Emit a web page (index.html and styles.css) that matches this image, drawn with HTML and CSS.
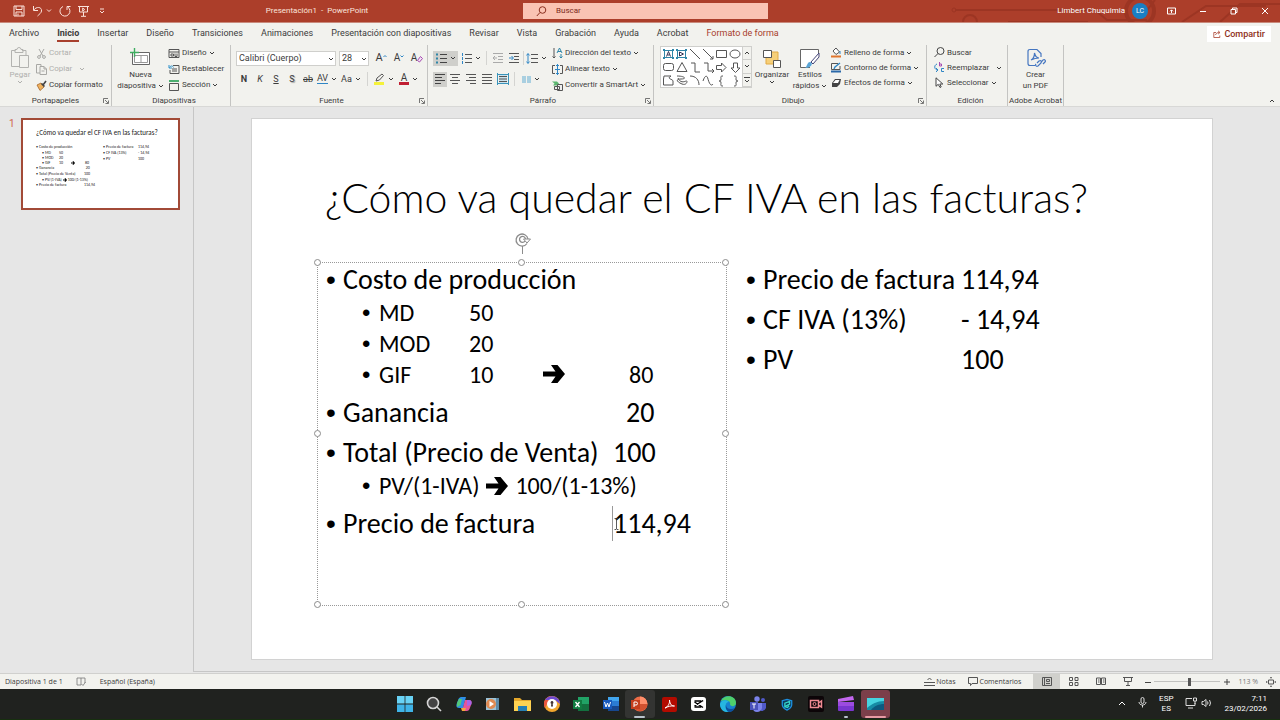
FILE: index.html
```html
<!DOCTYPE html>
<html lang="es">
<head>
<meta charset="utf-8">
<meta name="viewport" content="width=device-width, initial-scale=1">
<title>Presentación1 - PowerPoint</title>
<link rel="stylesheet" href="styles.css">
</head>
<body>
<svg class="defs" aria-hidden="true">
  <symbol id="chev" viewBox="0 0 6 4"><path d="M1 1l2 2 2-2" fill="none" stroke="currentColor"/></symbol>
  <symbol id="launch" viewBox="0 0 6 6"><path d="M.5 5V.5H5M2 2l3 3M5.500 2.500v3h-3" fill="none" stroke="#555" stroke-width=".8"/></symbol>
  <symbol id="arrow" viewBox="0 0 22 18"><path d="M0 6.500h12.500L8 0h6.500L22 9l-7.500 9H8l4.500-6.500H0z" fill="#000"/></symbol>
</svg>

<header class="titlebar">
  <svg class="circuit" viewBox="0 0 330 22" fill="none" stroke="#93301f" aria-hidden="true">
    <path d="M5 10h140l12 10h40M58 22h80M270 22l20-18h40M205 0l-14 18" stroke-width="2"/>
    <circle cx="4" cy="10" r="2"/><circle cx="20" cy="22" r="7" stroke-width="2"/><circle cx="190" cy="11" r="14" stroke-width="4"/><path d="M232 22l24-16h60" stroke-width="2"/>
  </svg>
  <div class="qat">
    <button aria-label="Guardar"><svg width="12" height="12" viewBox="0 0 12 12" fill="none" stroke="#fbe3dc"><path d="M1 1h10v10H1zM3 1v3.500h6V1M3 11V7h6v4M5 8.500v2"/></svg></button>
    <button aria-label="Deshacer"><svg width="20" height="12" viewBox="0 0 20 12" fill="none" stroke="#fbe3dc"><path d="M1.500 1v4.500H6M1.800 5C4 1.500 10 1.500 9.500 6 9.300 8 7.500 9 5.500 11"/><path d="M15 4.500l2 2 2-2"/></svg></button>
    <button aria-label="Rehacer"><svg width="12" height="12" viewBox="0 0 12 12" fill="none" stroke="#fbe3dc"><path d="M4 1.500a5 5 0 1 0 4.500.3M8 5V1.500h3.500"/></svg></button>
    <button aria-label="Presentación desde el principio"><svg width="11" height="12" viewBox="0 0 11 12" fill="none" stroke="#fbe3dc"><path d="M0 1.500h11M1.500 1.500v5.500h8V1.500M5.500 7v4M3 11.300h5M4.700 3v3l2-1.500z"/></svg></button>
    <button class="more" aria-label="Personalizar barra"><svg width="6" height="6" viewBox="0 0 6 6" fill="none" stroke="#fbe3dc"><path d="M1 1h4M1 3l2 2 2-2"/></svg></button>
  </div>
  <h1 class="doc">Presentación1&nbsp; -&nbsp; PowerPoint</h1>
  <label class="search">
    <svg width="11" height="11" viewBox="0 0 11 11" fill="none" stroke="#8a2f1f"><circle cx="6.500" cy="4" r="3.300"/><path d="M4 6.500L.8 10"/></svg>
    <input type="text" placeholder="Buscar" aria-label="Buscar">
  </label>
  <div class="account">
    <span>Limbert Chuquimia</span><span class="avatar">LC</span>
    <button aria-label="Opciones de cinta"><svg width="9" height="8" viewBox="0 0 9 8" fill="none" stroke="#fff"><path d="M.5 1h8v6h-8zM4.500 6V3M3 4.300l1.500-1.500L6 4.300"/></svg></button>
    <button aria-label="Minimizar"><svg width="8" height="8" viewBox="0 0 8 8" stroke="#fff"><path d="M1 4.500h6"/></svg></button>
    <button aria-label="Restaurar"><svg width="8" height="8" viewBox="0 0 8 8" fill="none" stroke="#fff"><path d="M1 2.500h4.500V7H1zM2.500 2.500V1H7v4.500H5.500"/></svg></button>
    <button aria-label="Cerrar"><svg width="8" height="8" viewBox="0 0 8 8" stroke="#fff"><path d="M1 1l6 6M7 1L1 7"/></svg></button>
  </div>
</header>

<nav class="tabs">
  <button>Archivo</button><button class="on">Inicio</button><button>Insertar</button><button>Diseño</button><button>Transiciones</button><button>Animaciones</button><button>Presentación con diapositivas</button><button>Revisar</button><button>Vista</button><button>Grabación</button><button>Ayuda</button><button>Acrobat</button><button class="ctx">Formato de forma</button>
  <button class="share"><svg width="8" height="8" viewBox="0 0 8 8" fill="none" stroke="#a8402d" stroke-width=".8"><path d="M3 2.500H.8v5h6V5.500M2.500 5C3 3 4.500 2.500 6.500 2.500M5 .8l2 1.700-2 1.700"/></svg>Compartir</button>
</nav>

<section class="ribbon" aria-label="Cinta de opciones">
  <div class="group g-clip">
    <div class="tools">
      <button class="big off"><svg width="20" height="22" viewBox="0 0 20 22" fill="none" stroke="#b3b3b0"><path d="M9 19.500H1.500v-16h4M12 3.500h4V8M5 5.500v-3h2a2 2 0 0 1 4 0h2v3zM9.500 8.500h9v12h-9z"/></svg><span>Pegar</span><svg class="c"><use href="#chev"/></svg></button>
      <div class="stack">
        <button class="off"><svg width="11" height="11" viewBox="0 0 11 11" fill="none" stroke="#a8a8a5"><path d="M3 1l4 7M8 1L4 8"/><circle cx="3" cy="9" r="1.400"/><circle cx="8" cy="9" r="1.400"/></svg>Cortar</button>
        <button class="off"><svg width="11" height="11" viewBox="0 0 11 11" fill="none" stroke="#a8a8a5"><path d="M4 9H.5V.5H5V2M4 2.500h4l2.500 2.500v5.500H4zM8 2.500V5h2.500M5.500 7h3"/></svg>Copiar <svg class="c gap"><use href="#chev"/></svg></button>
        <button><svg width="11" height="11" viewBox="0 0 11 11"><path d="M1 5l4-2 3 4-4 3.500z" fill="#f0b35e" stroke="#a4642a" stroke-width=".8"/><path d="M5.500 3.500l3 3M7 5l3-4" stroke="#444" stroke-width="1.600"/></svg>Copiar formato</button>
      </div>
    </div>
    <div class="name">Portapapeles<svg class="l"><use href="#launch"/></svg></div>
  </div>
  <div class="group g-slides">
    <div class="tools">
      <button class="big"><svg width="21" height="22" viewBox="0 0 21 22" fill="none"><path d="M2.500 5.500h17v12h-17z" fill="#fff" stroke="#666"/><path d="M4.500 8.500h13M4.500 15.500h13M4.500 8.500v7M11 8.500v7M17.500 8.500v7" stroke="#999"/><path d="M4.500 1v9M0 5.500h9" stroke="#3fae61" stroke-width="1.400"/></svg><span>Nueva<br>diapositiva <svg class="c"><use href="#chev"/></svg></span></button>
      <div class="stack">
        <button><svg width="12" height="11" viewBox="0 0 12 11" fill="none" stroke="#555"><path d="M1 1.500h10v8H1zM1 4h10M3 6v2h2.500V6zM7 5.500v3h2v-3"/></svg>Diseño <svg class="c"><use href="#chev"/></svg></button>
        <button><svg width="12" height="11" viewBox="0 0 12 11" fill="none" stroke="#555"><path d="M5 1.500h6v8H2V6M4 7h5M4 5h5"/><path d="M1 1v3h3M1.500 3.500C3 1 5 2 5.500 3.500" stroke="#2c8fc9"/></svg>Restablecer</button>
        <button><svg width="12" height="11" viewBox="0 0 12 11" fill="none" stroke="#555"><path d="M1 1h10" stroke="#4caf70" stroke-width="2"/><path d="M1.500 3.500h9v7h-9z"/></svg>Sección <svg class="c"><use href="#chev"/></svg></button>
      </div>
    </div>
    <div class="name">Diapositivas</div>
  </div>
  <div class="group g-font">
    <div class="rows">
      <div class="line">
        <span class="combo font"><select aria-label="Fuente"><option>Calibri (Cuerpo)</option></select><svg class="c"><use href="#chev"/></svg></span>
        <span class="combo size"><select aria-label="Tamaño de fuente"><option>28</option></select><svg class="c"><use href="#chev"/></svg></span>
        <button class="ic w18 t11" aria-label="Aumentar tamaño">A<svg width="4" height="8" viewBox="0 0 4 8" fill="none" stroke="#2f86c5"><path d="M.5 3L2 1.500 3.500 3"/></svg></button>
        <button class="ic w18 t10" aria-label="Reducir tamaño">A<svg width="4" height="8" viewBox="0 0 4 8" fill="none" stroke="#2f86c5"><path d="M.5 1.500L2 3l1.500-1.500"/></svg></button>
        <button class="ic w18 t10" aria-label="Borrar formato">A<svg width="6" height="10" viewBox="0 0 6 10" fill="#f1e3f3" stroke="#a64ab0"><path d="M.5 7.500l3-4 2 2-3 3.500z"/></svg></button>
      </div>
      <div class="line">
        <button class="ic w16 t9"><b>N</b></button><button class="ic w16 t9"><i>K</i></button><button class="ic w16 t9"><u>S</u></button><button class="ic w16 t9 shadow">S</button><button class="ic w16 t9"><s>ab</s></button>
        <button class="ic w22 t9"><span class="av">AV</span><svg class="c"><use href="#chev"/></svg></button>
        <button class="ic w26 t9">Aa<svg class="c"><use href="#chev"/></svg></button><i class="sep"></i>
        <button class="ic w25" aria-label="Resaltar"><svg width="12" height="12" viewBox="0 0 12 12"><path d="M1 9h10v3H1z" fill="#f5f23a"/><path d="M3 8l1-3 5-4 1.500 1.500L6.500 7z" fill="none" stroke="#555"/></svg><svg class="c"><use href="#chev"/></svg></button>
        <button class="ic w25 fcol" aria-label="Color de fuente"><span class="fc">A</span><svg class="c"><use href="#chev"/></svg></button>
      </div>
    </div>
    <div class="name">Fuente<svg class="l"><use href="#launch"/></svg></div>
  </div>
  <div class="group g-para">
    <div class="tools">
      <div class="rows">
        <div class="line">
          <button class="ic w25 act" aria-label="Viñetas"><svg width="11" height="11" viewBox="0 0 11 11"><path d="M4 1.500h7M4 5.500h7M4 9.500h7" stroke="#444"/><path d="M0 .5h2v2H0zM0 4.500h2v2H0zM0 8.500h2v2H0z" fill="#2f86a8"/></svg><svg class="c"><use href="#chev"/></svg></button>
          <button class="ic w25" aria-label="Numeración"><svg width="11" height="11" viewBox="0 0 11 11"><path d="M4 1.500h7M4 5.500h7M4 9.500h7" stroke="#555"/><path d="M1.500 0v3M1.500 4v3M1.500 8v3" stroke="#2f86c5"/></svg><svg class="c"><use href="#chev"/></svg></button><i class="sep"></i>
          <button class="ic w16" aria-label="Reducir sangría"><svg width="10" height="10" viewBox="0 0 10 10" stroke="#aaa" fill="none"><path d="M0 .5h10M5 3.500h5M5 6.500h5M0 9.500h10M4 5H0M2 3L0 5l2 2"/></svg></button>
          <button class="ic w16" aria-label="Aumentar sangría"><svg width="10" height="10" viewBox="0 0 10 10" stroke="#555" fill="none"><path d="M0 .5h10M5 3.500h5M5 6.500h5M0 9.500h10"/><path d="M0 5h4M2.500 3l2 2-2 2" stroke="#2f86c5"/></svg></button><i class="sep thin"></i>
          <button class="ic w22" aria-label="Interlineado"><svg width="12" height="11" viewBox="0 0 12 11" stroke="#555" fill="none"><path d="M5 1.500h7M5 5.500h7M5 9.500h7"/><path d="M2 .5v10M.3 2.500L2 .7l1.700 1.800M.3 8.500L2 10.300l1.700-1.800" stroke="#2f86c5"/></svg><svg class="c"><use href="#chev"/></svg></button>
        </div>
        <div class="line">
          <button class="ic w14 act" aria-label="Izquierda"><svg width="10" height="10" viewBox="0 0 10 10" stroke="#444"><path d="M0 .5h10M0 3.500h7M0 6.500h10M0 9.500h6"/></svg></button>
          <button class="ic w16" aria-label="Centrar"><svg width="10" height="10" viewBox="0 0 10 10" stroke="#555"><path d="M0 .5h10M2 3.500h6M0 6.500h10M2 9.500h6"/></svg></button>
          <button class="ic w16" aria-label="Derecha"><svg width="10" height="10" viewBox="0 0 10 10" stroke="#555"><path d="M0 .5h10M3 3.500h7M0 6.500h10M4 9.500h6"/></svg></button>
          <button class="ic w16" aria-label="Justificar"><svg width="10" height="10" viewBox="0 0 10 10" stroke="#555"><path d="M0 .5h10M0 3.500h10M0 6.500h10M0 9.500h10"/></svg></button>
          <button class="ic w16" aria-label="Distribuir"><svg width="12" height="12" viewBox="0 0 12 12" fill="none"><path d="M2 1.500h8v9H2z" fill="#c9e2ee"/><path d="M2 3.500h8M2 6h8M2 8.500h8" stroke="#555"/><path d="M.5 0v12M11.500 0v12M1 1.500h10M1 10.500h10" stroke="#3994bb"/></svg></button><i class="sep"></i>
          <button class="ic w25" aria-label="Columnas"><svg width="9" height="7" viewBox="0 0 9 7" fill="#a9cfe0"><path d="M0 0h4v7H0zM5 0h4v7H5z"/></svg><svg class="c"><use href="#chev"/></svg></button>
        </div>
      </div>
      <div class="stack">
        <button><svg width="11" height="12" viewBox="0 0 11 12" fill="none"><path d="M2 1v10M.5 9.500L2 11l1.500-1.500" stroke="#555"/><path d="M5 6l2.500-5L10 6M6 4.500h3M9 7v4M7.500 9.500L9 11l1.500-1.500" stroke="#2f86a8"/></svg>Dirección del texto <svg class="c"><use href="#chev"/></svg></button>
        <button><svg width="11" height="11" viewBox="0 0 11 11" fill="none"><path d="M3 1.500H.5v8H3M8 1.500h2.500v8H8" stroke="#555"/><path d="M5.500 0v11M3 5.500h5M4 2l1.500-1.500L7 2M4 9l1.500 1.500L7 9" stroke="#2f86c5"/></svg>Alinear texto <svg class="c"><use href="#chev"/></svg></button>
        <button><svg width="11" height="11" viewBox="0 0 11 11" fill="none"><path d="M0 1.500h5l2 2-2 2H1l1.500-2z" fill="#5bb66f"/><path d="M5.500 4.500h5v6h-5zM2.500 6.500h5v3h-5z" fill="#eee" stroke="#555"/></svg>Convertir a SmartArt <svg class="c"><use href="#chev"/></svg></button>
      </div>
    </div>
    <div class="name">Párrafo<svg class="l"><use href="#launch"/></svg></div>
  </div>
  <div class="group g-draw">
    <div class="tools">
      <div class="gallery">
        <svg width="81" height="40" viewBox="0 0 81 40" fill="none" stroke="#555" role="img" aria-label="Formas">
          <g stroke="#2f86a8"><path d="M3.500 3.500h8v7h-8zM16.500 3.500h8v7h-8z"/><path d="M2 2h2v2H2zM11 2h2v2h-2zM2 10h2v2H2zM11 10h2v2h-2zM15 2h2v2h-2zM24 2h2v2h-2zM15 10h2v2h-2zM24 10h2v2h-2z" fill="#2f86a8" stroke="none"/><path d="M5.500 9.500l2-5 2 5M6.500 8h2M18.500 5l4 2-4 2z" stroke="#335"/></g>
          <path d="M29 2l10 10M42 2l10 10M52 9v3h-3M55.500 3.500h10v7h-10z"/><ellipse cx="74" cy="7" rx="5" ry="4"/>
          <rect x="2.500" y="16.500" width="10" height="7" rx="2"/><path d="M16 24.500l5-9 5 9zM30 16h4v9h5M43 16h4v8h6M51 22l2 2-2 2M55.500 18.500h5v-2.500l4.500 4.500-4.500 4.500v-2.500h-5zM72.500 16h4v5h2.500l-4.500 4.500-4.500-4.500h2.500z"/>
          <path d="M3 29h7c-5 3 2 3 2 5v4H2.500v-6zM16 29c8 0 10 3 4 3s-4 3 1 5 6-4 4-3-6 2-8-3M29 29c6 0 9 4 9 9M42 34c2-6 4-6 5-2s3 8 5 5M62 29c-3 0-2 1-2 3s-1 2-2 2c1 0 2 0 2 2s-1 3 2 3M73 29c3 0 2 1 2 3s1 2 2 2c-1 0-2 0-2 2s1 3-2 3"/>
        </svg>
        <div class="spin"><button aria-label="Subir"><svg class="c up"><use href="#chev"/></svg></button><button aria-label="Bajar"><svg class="c"><use href="#chev"/></svg></button><button aria-label="Más"><svg width="6" height="6" viewBox="0 0 6 6" fill="none" stroke="#444"><path d="M0 .5h6M1 3l2 2 2-2"/></svg></button></div>
      </div>
      <button class="big org"><svg width="20" height="22" viewBox="0 0 20 22"><path d="M4 5h12v12H4z" fill="#f6cf78" stroke="#e2aa45"/><path d="M1.500 3.500h8v7h-8zM11.500 13.500h7v7h-7z" fill="#fff" stroke="#555"/></svg><span>Organizar</span><svg class="c"><use href="#chev"/></svg></button>
      <button class="big sty"><svg width="20" height="22" viewBox="0 0 20 22"><path d="M10 20.500H.5v-18h18V9" fill="#fff" stroke="#666"/><path d="M5 21c2-1 2-6 5-6s3 6-5 6z" fill="#5aa5d6"/><path d="M11 15l8-9v4l-6 7z" fill="#fff" stroke="#447"/></svg><span>Estilos<br>rápidos <svg class="c"><use href="#chev"/></svg></span></button>
      <div class="stack tight">
        <button><svg width="12" height="11" viewBox="0 0 12 11" fill="none"><path d="M3 4l3-3 3.500 4L6 7.500z" stroke="#555" fill="#fff"/><path d="M10 4v3" stroke="#2f86c5"/><path d="M1 8.500h10v2H1z" fill="#e0762f"/></svg>Relleno de forma <svg class="c"><use href="#chev"/></svg></button>
        <button><svg width="12" height="11" viewBox="0 0 12 11" fill="none"><path d="M8 1.500H1.500v6H10V4" stroke="#555"/><path d="M4 7l1-2 5-4" stroke="#2f86c5" stroke-width="1.400"/><path d="M1 8.500h10v2H1z" fill="#2a68a8"/></svg>Contorno de forma <svg class="c"><use href="#chev"/></svg></button>
        <button><svg width="12" height="11" viewBox="0 0 12 11"><path d="M2 6l3-4h6l-1 5-3 3H2z" fill="#444"/><path d="M3 6l2.500-3h4L8 6z" fill="#fff"/></svg>Efectos de forma <svg class="c"><use href="#chev"/></svg></button>
      </div>
    </div>
    <div class="name">Dibujo<svg class="l"><use href="#launch"/></svg></div>
  </div>
  <div class="group g-edit">
    <div class="tools">
      <div class="stack tight">
        <button><svg width="11" height="11" viewBox="0 0 11 11" fill="none" stroke="#444"><circle cx="6.500" cy="4" r="3.500"/><path d="M4 6.500L.5 10"/></svg>Buscar</button>
        <button><svg width="11" height="11" viewBox="0 0 11 11" fill="none"><path d="M5.500 0v4h2V2h-2" stroke="#a64ab0"/><path d="M10 6.500H7.500v3H10M3 2C0 3 0 7 3 8M2 6l2 2-2 2" stroke="#2f86c5"/></svg>Reemplazar <svg class="c gap"><use href="#chev"/></svg></button>
        <button><svg width="11" height="11" viewBox="0 0 11 11" fill="#fff" stroke="#444"><path d="M2 .8v8.500l2.200-2L6 10.500l1.200-.6L5.800 7h3z"/></svg>Seleccionar <svg class="c"><use href="#chev"/></svg></button>
      </div>
    </div>
    <div class="name">Edición</div>
  </div>
  <div class="group g-pdf">
    <div class="tools">
      <button class="big"><svg width="20" height="22" viewBox="0 0 20 22" fill="none" stroke="#4576c0" stroke-width="1.200"><path d="M9 18.500H4q-2 0-2-2v-12q0-2 2-2h7l4 4V10M5 13c2-1 3.500-4 3.500-7 1 4 2 5 4.500 5-3 0-5 .5-8 2z"/><path d="M11 16l2-2c2-1 3 0 2 2l-3 3c-2 1-3-1-2-2M14 17l3-4c2-1 3 1 2 2l-2 2"/></svg><span>Crear<br>un PDF</span></button>
    </div>
    <div class="name">Adobe Acrobat</div>
  </div>
  <button class="collapse" aria-label="Contraer la cinta"><svg class="c up"><use href="#chev"/></svg></button>
</section>

<main class="work">
  <aside class="panel">
    <span class="num">1</span>
    <div class="thumb">
      <h2>¿Cómo va quedar el CF IVA en las facturas?</h2>
      <div class="tcols">
        <ul>
          <li><span>Costo de producción</span></li>
          <li class="s"><span>MD</span>50</li>
          <li class="s"><span>MOD</span>20</li>
          <li class="s"><span>GIF</span><em>10</em><svg width="4" height="4"><use href="#arrow"/></svg><b>80</b></li>
          <li><span>Ganancia</span>&nbsp; 20</li>
          <li><span>Total (Precio de Venta)</span>100</li>
          <li class="s m"><q>PV/(1-IVA)</q><svg width="4" height="4"><use href="#arrow"/></svg><q>100/(1-13%)</q></li>
          <li><span>Precio de factura</span>114,94</li>
        </ul>
        <ul class="r">
          <li><span>Precio de factura</span>114,94</li>
          <li><span>CF IVA (13%)</span>- 14,94</li>
          <li><span>PV</span>100</li>
        </ul>
      </div>
    </div>
  </aside>
  <div class="canvas">
    <article class="slide">
      <h2>¿Cómo va quedar el CF IVA en las facturas?</h2>
      <div class="cols">
        <div class="box">
          <svg class="rot" width="18" height="22" viewBox="0 0 18 22" fill="none" stroke="#8c8c8c"><path d="M9.500 14v8"/><path d="M14 11.500A6 6 0 1 1 15 7M12 9A3 3 0 1 1 12.500 7" stroke-width="1.300"/><path d="M10.500 7h7l-3.500 4z" fill="#fff"/></svg>
          <i class="h nw"></i><i class="h n"></i><i class="h ne"></i><i class="h w"></i><i class="h e"></i><i class="h sw"></i><i class="h so"></i><i class="h se"></i>
          <ul class="list">
            <li><span class="k">Costo de producción</span></li>
            <li class="sub"><span class="k">MD</span>50</li>
            <li class="sub"><span class="k">MOD</span>20</li>
            <li class="sub"><span class="k">GIF</span><span class="ten">10</span><span class="to"><svg width="22" height="18" role="img" aria-label="flecha"><use href="#arrow"/></svg></span>80</li>
            <li><span class="k">Ganancia</span><span class="in">20</span></li>
            <li><span class="k">Total (Precio de Venta)</span>100</li>
            <li class="sub mix"><span>PV/(1-IVA)</span><svg width="22" height="18" role="img" aria-label="flecha"><use href="#arrow"/></svg><span>100/(1-13%)</span></li>
            <li><span class="k">Precio de factura</span><span class="caret">114,94<svg class="ibeam" width="5" height="12" viewBox="0 0 5 12" fill="none" stroke="#333" stroke-width=".8"><path d="M.5.5h1.500l.5.500.5-.5h1.500M2.500 1v10M.5 11.500h1.500l.5-.5.5.500h1.500"/></svg></span></li>
          </ul>
        </div>
        <ul class="list right">
          <li><span class="k">Precio de factura</span>114,94</li>
          <li><span class="k">CF IVA (13%)</span>- 14,94</li>
          <li><span class="k">PV</span>100</li>
        </ul>
      </div>
    </article>
  </div>
</main>

<footer class="status">
  <span>Diapositiva 1 de 1</span>
  <button aria-label="Ortografía"><svg width="11" height="9" viewBox="0 0 11 9" fill="none" stroke="#777" stroke-width=".8"><path d="M5 1v7H1V1h3zM5 1h4v5M9.500 5L7 8.500 5.500 7"/></svg></button>
  <button>Español (España)</button>
  <div class="views">
    <button class="notes"><svg width="11" height="10" viewBox="0 0 11 10" fill="none" stroke="#555"><path d="M0 5.500h11M0 8.500h11M3.500 3l2-2 2 2"/></svg>Notas</button>
    <button class="comm"><svg width="10" height="9" viewBox="0 0 10 9" fill="none" stroke="#555"><path d="M.5 .5h9v6H4L2.500 8.500V6.500h-2z"/></svg>Comentarios</button>
    <button class="v on" aria-label="Normal"><svg width="10" height="9" viewBox="0 0 10 9" fill="none" stroke="#555"><path d="M.5 .5h9v8h-9zM2.500 1v7M4.500 2.500h3v2h-3zM4 6.500h4"/></svg></button>
    <button class="v" aria-label="Clasificador"><svg width="10" height="9" viewBox="0 0 10 9" fill="none" stroke="#555"><path d="M.5 .5h3v3h-3zM6 .5h3v3H6zM.5 5.500h3v3h-3zM6 5.500h3v3H6z"/></svg></button>
    <button class="v" aria-label="Lectura"><svg width="10" height="9" viewBox="0 0 10 9" fill="none" stroke="#555"><path d="M.5 1h4v6.500h-4zM5.500 1h4v6.500h-4zM2 3h1.500M2 5h1.500M7 3h1.500M7 5h1.500"/></svg></button>
    <button class="v" aria-label="Presentación"><svg width="10" height="9" viewBox="0 0 10 9" fill="none" stroke="#555"><path d="M0 .5h10M1.500 .5v4h7v-4M5 4.500v4M3 8.500h4"/></svg></button>
    <button class="z" aria-label="Alejar"><svg width="6" height="6" viewBox="0 0 6 6" stroke="#444"><path d="M0 3.500h6"/></svg></button>
    <input type="range" min="0" max="100" value="53" aria-label="Zoom">
    <button class="z" aria-label="Acercar"><svg width="6" height="6" viewBox="0 0 6 6" stroke="#444"><path d="M0 3h6M3 0v6"/></svg></button>
    <button class="pct">113 %</button>
    <button aria-label="Ajustar"><svg width="10" height="10" viewBox="0 0 10 10" fill="none" stroke="#555"><path d="M2.500 3h5v4h-5zM4 1.200L5 .3l1 .9M4 8.800l1 .9 1-.9M1.200 4L.3 5l.9 1M8.800 4l.9 1-.9 1"/></svg></button>
  </div>
</footer>

<nav class="taskbar" aria-label="Barra de tareas">
  <span></span>
  <div class="apps">
    <button aria-label="Inicio"><svg width="16" height="16" viewBox="0 0 16 16" fill="#3fb4e8"><path d="M0 0h7.600v7.600H0zM8.400 0H16v7.600H8.400z" fill="#69d3f5"/><path d="M0 8.400h7.600V16H0zM8.400 8.400H16V16H8.400z"/></svg></button>
    <button aria-label="Buscar"><svg width="16" height="16" viewBox="0 0 16 16" fill="#444" stroke="#d5d5d5" stroke-width="1.600"><circle cx="7" cy="7" r="5.500"/><path d="M11 11l4 4"/></svg></button>
    <button aria-label="Copilot"><svg width="16" height="16" viewBox="0 0 16 16"><path d="M5 1h5L7 12H3C0 12 0 9 1 7l1.500-4C3 2 4 1 5 1z" fill="#2e8fe6"/><path d="M1 7l2-4h3L4.500 9 1 11z" fill="#53c878"/><path d="M9 4h4c3 0 3 3 2 5l-1.500 4c-.5 1-1.500 2-2.500 2H6z" fill="#e4559a"/><path d="M11 4h2c3 0 3 3 2 5l-4 1z" fill="#a964e8"/><path d="M5 12h5l-1 3H6z" fill="#f3a53e"/></svg></button>
    <button aria-label="Reproductor"><svg width="15" height="14" viewBox="0 0 15 14"><path d="M1 1h13v12H1z" fill="#9dc4d8"/><path d="M11 1h3v12h-3z" fill="#5d8ba8"/><circle cx="6" cy="7" r="5" fill="#df8a52"/><path d="M4.500 4l4.500 3-4.500 3z" fill="#fff"/></svg></button>
    <button aria-label="Explorador"><svg width="17" height="16" viewBox="0 0 17 16"><path d="M0 2h6l2 2h9v10H0z" fill="#e5a82b"/><path d="M0 5h17v10H0z" fill="#ffd352"/><path d="M4 10h9v5H4z" fill="#267fb5"/></svg></button>
    <button aria-label="Navegador seguro"><svg width="16" height="16" viewBox="0 0 16 16"><circle cx="8" cy="8" r="8" fill="#f2a62e"/><path d="M8 0a8 8 0 0 0-7 12L5 4z" fill="#e9573f"/><path d="M1 4C4-2 16-1 16 8l-5-4z" fill="#6f4bd0"/><circle cx="8" cy="8" r="5" fill="#fff"/><path d="M8 5a1.500 1.500 0 0 1 .7 2.800l.3 2.700H7l.3-2.700A1.500 1.500 0 0 1 8 5z" fill="#433"/></svg></button>
    <button aria-label="Excel"><svg width="16" height="16" viewBox="0 0 16 16"><path d="M5 1h11v14H5z" fill="#21a366"/><path d="M5 8h11v7H5z" fill="#13703f"/><path d="M0 4h9v9H0z" fill="#107c41"/><path d="M2.500 6l4 5M6.500 6l-4 5" stroke="#fff" stroke-width="1.300"/></svg></button>
    <button aria-label="Word"><svg width="16" height="16" viewBox="0 0 16 16"><path d="M5 1h11v14H5z" fill="#41a5ee"/><path d="M5 5h11v10H5z" fill="#2b7cd3"/><path d="M5 10h11v5H5z" fill="#17478f"/><path d="M0 4h9v9H0z" fill="#185abd"/><path d="M1.500 6l1.500 5 1.500-4L6 11l1.500-5" stroke="#fff" fill="none"/></svg></button>
    <button class="run" aria-label="PowerPoint"><svg width="17" height="16" viewBox="0 0 17 16"><circle cx="9" cy="8" r="7.500" fill="#ed6c47"/><path d="M9 .5a7.500 7.500 0 0 1 7.500 7.500H9z" fill="#ff8f6b"/><path d="M1.500 8h15A7.500 7.500 0 0 1 2 10z" fill="#d35230"/><path d="M0 4h9v9H0z" fill="#c43e1c"/><path d="M3 11V6h2a1.500 1.500 0 0 1 0 3H3" stroke="#fff" fill="none"/></svg></button>
    <button aria-label="Acrobat"><svg width="15" height="15" viewBox="0 0 15 15"><rect width="15" height="15" rx="2" fill="#b30b00"/><path d="M3 11c3-1 5-5 4.500-8C8 8 10 9 12.500 9 9 8.500 6 9.500 3 11z" fill="none" stroke="#fff"/></svg></button>
    <button aria-label="CapCut"><svg width="15" height="14" viewBox="0 0 15 14"><rect width="15" height="14" rx="3" fill="#fff"/><path d="M11.500 4L12 3.500 3.500 9M12 10.500L3.500 5M3.500 4h6v1.500M3.500 10h6V8.500" stroke="#000" stroke-width="1.400" fill="none"/></svg></button>
    <button aria-label="Edge"><svg width="16" height="16" viewBox="0 0 16 16"><circle cx="8" cy="8" r="8" fill="#1782cf"/><path d="M1 5C4-2 16-1 16 7c0 4-6 4-6 1 1-3-4-5-9-3z" fill="#4fd06b"/><path d="M0 8c1-4 6-5 9-2-5 0-4 7 1 9-6 3-10-2-10-7z" fill="#26b6e0"/><path d="M6 9c0 4 5 5 9 3-2 3-4 4-6 4-3-1-4-5-3-7z" fill="#0c4f9e"/></svg></button>
    <button aria-label="Teams"><svg width="16" height="16" viewBox="0 0 16 16"><circle cx="7" cy="3" r="2.700" fill="#7b83eb"/><circle cx="13" cy="4" r="2" fill="#5059c9"/><path d="M10 7h6v5q-1 3-5 3z" fill="#5059c9"/><path d="M3 7h9v5q-1 4-5 4t-4-4z" fill="#7b83eb"/><path d="M0 6h8v8H0z" fill="#4b53bc"/><path d="M2 8h4M4 8v4.500" stroke="#fff"/></svg></button>
    <button aria-label="Seguridad"><svg width="12" height="13" viewBox="0 0 14 15" fill="#0b3a5c" stroke="#1d8fe0" stroke-width="1.500"><path d="M7 1.500L12.500 3v5q-.5 4-5.500 6-5-2-5.500-6V3z"/><path d="M4.500 10V6L10 4v3zM4.500 10l3 1 2-2" stroke="#35d6c8"/></svg></button>
    <button aria-label="Grabador"><svg width="16" height="16" viewBox="0 0 16 16" fill="none" stroke="#f08a92"><rect width="16" height="16" rx="2" fill="#0c0508" stroke="none"/><path d="M2.500 4.500h8v7h-8zM10.500 7l3-2v6l-3-2z" stroke-width="1.500"/><circle cx="6.500" cy="8" r="1.500"/></svg></button>
    <button class="dot" aria-label="Clipchamp"><svg width="16" height="16" viewBox="0 0 16 16"><path d="M0 3l15-3 1 4L0 6z" fill="#c267ef"/><path d="M0 6h16v8q0 1-1 1H1q-1 0-1-1z" fill="#7a36cf"/><path d="M0 6h16v4H0z" fill="#9c4be0"/></svg></button>
    <button class="rec" aria-label="Editor de vídeo"><svg width="17" height="12" viewBox="0 0 17 12"><path d="M0 0h17v12H0z" fill="#168ba5"/><path d="M0 0h17v3C10 3 5 6 0 10z" fill="#46d3e0"/><path d="M4 12c3-4 8-6 13-6v6z" fill="#0c5a80"/></svg></button>
  </div>
  <div class="tray">
    <button aria-label="Iconos ocultos"><svg width="8" height="5" viewBox="0 0 8 5" fill="none" stroke="#fff"><path d="M1 4l3-3 3 3"/></svg></button>
    <button aria-label="Micrófono"><svg width="9" height="11" viewBox="0 0 9 11" fill="none" stroke="#ddd"><rect x="3" y=".5" width="3" height="6" rx="1.500"/><path d="M1 5c0 4 7 4 7 0M4.500 8v2.500"/></svg></button>
    <button class="two">ESP<br>ES</button>
    <button aria-label="Red y volumen"><svg width="27" height="12" viewBox="0 0 27 12" fill="none" stroke="#ddd"><path d="M7 1.500H1v7h9V6M3 11h5M8.500 1h3v3h-3zM10 4v3M17 4.500h1.500L21 2.500v7l-2.500-2H17zM22.500 4.500q1 1.500 0 3M24.500 3q2 3 0 6"/></svg></button>
    <button class="two clock">7:11<br>23/02/2026</button>
  </div>
</nav>
</body>
</html>
```

FILE: styles.css
```css
* { box-sizing: border-box; }
body {
  margin: 0;
  min-height: 100vh;
  display: flex;
  flex-direction: column;
  background: #e6e6e6;
  color: #3c3c3c;
  font: 8px/10px Roboto, "Noto Sans", sans-serif;
}
button { border: 0; padding: 0; margin: 0; background: none; color: inherit; font: inherit; white-space: nowrap; }
svg { flex: none; }
ul { list-style: none; margin: 0; padding: 0; }
.defs { position: absolute; width: 0; height: 0; }
.c { width: 6px; height: 4px; }
.c.gap { margin-left: 5px; }
.c.up { transform: rotate(180deg); }

/* Title bar */
.titlebar {
  position: relative;
  display: grid;
  grid-template-columns: 111px 412fr 245px 512fr;
  align-items: center;
  height: 23px;
  background: #ac3e2a;
  border-bottom: 1px solid #c98a7c;
  color: #fff;
}
.circuit { position: absolute; right: 0; top: 0; width: 330px; height: 22px; opacity: .6; }
.qat { display: flex; align-items: center; gap: 7px; padding-left: 13px; }
.qat button, .account button { display: flex; justify-content: center; align-items: center; }
.qat .more { margin-left: 3px; }
.doc { margin: 0; font: inherit; text-align: center; color: #fbe3dc; }
.search { display: flex; align-items: center; gap: 9px; height: 16px; padding-left: 13px; background: #fac3b3; }
.search input { border: 0; padding: 0; background: none; font: inherit; width: 160px; outline: 0; }
.search input::placeholder { color: #7c2a1c; opacity: 1; }
.account { position: relative; display: flex; justify-content: flex-end; align-items: center; height: 22px; }
.account button { width: 31px; height: 22px; }
.avatar { width: 16px; height: 16px; margin: 0 8px 0 7px; border-radius: 50%; background: #1a7fc4; font-size: 7px; line-height: 16px; text-align: center; }

/* Tabs */
.tabs { display: flex; align-items: center; gap: 18px; height: 22px; padding: 0 9px; background: #f2f2ee; font-size: 9px; }
.tabs button { height: 16px; border-bottom: 2px solid transparent; line-height: 12px; }
.tabs .on { font-weight: 700; border-color: #a8402d; }
.tabs .ctx { color: #a8402d; }
.tabs .share { display: flex; align-items: center; gap: 3px; margin-left: auto; padding: 0 6px; background: #fff; border: 0; color: #8e3020; font-weight: 500; }

/* Ribbon */
.ribbon { display: flex; min-height: 62px; background: #f2f2ee; border-bottom: 1px solid #d8d8d6; }
.group { display: flex; flex-direction: column; justify-content: space-between; border-right: 1px solid #c4c4c2; }
.g-clip { flex: 0 0 112px; padding-left: 9px; }
.g-slides { flex: 0 0 119px; padding-left: 6px; }
.g-font { flex: 0 0 197px; padding-left: 5px; }
.g-para { flex: 0 0 226px; padding-left: 5px; }
.g-draw { flex: 0 0 273px; padding-left: 6px; }
.g-edit { flex: 0 0 81px; padding-left: 7px; }
.g-pdf { flex: 0 0 56px; }
.tools { display: flex; align-items: flex-start; }
.name { position: relative; line-height: 10px; text-align: center; white-space: nowrap; }
.g-clip .name { margin-left: -9px; }
.l { position: absolute; right: 2px; top: 2px; width: 6px; height: 6px; }
.big { display: flex; flex-direction: column; align-items: center; padding-top: 2px; line-height: 11px; }
.g-clip .big { width: 22px; margin-right: 5px; }
.g-slides .big { width: 45px; margin-right: 5px; }
.g-pdf .big { width: 55px; }
.org { width: 40px; }
.sty { width: 36px; margin-right: 2px; }
.off { color: #b0b0ad; }
.stack { display: flex; flex-direction: column; }
.stack button { display: flex; align-items: center; gap: 2px; height: 16px; }
.stack.tight button { height: 15px; }
.rows { display: flex; flex-direction: column; gap: 5px; padding-top: 5px; }
.g-para .rows { width: 119px; }
.line { display: flex; align-items: center; height: 16px; }
.ic { display: flex; flex: none; align-items: center; justify-content: center; gap: 3px; height: 15px; }
.w14 { width: 14px; }
.w16 { width: 16px; }
.w18 { width: 18px; }
.w22 { width: 22px; }
.w25 { width: 25px; }
.w26 { width: 26px; }
.t9 { font-size: 9px; }
.t10 { font-size: 10px; }
.t11 { font-size: 11px; }
.t10, .t11 { gap: 0; }
.act { background: #cfcfcb; }
.sep { width: 1px; height: 14px; margin: 0 3px; background: #d4d4d1; }
.sep.thin { margin: 0 1px; }
.shadow { text-shadow: 1px 1px 1px #999; }
.av { height: 10px; line-height: 8px; border-bottom: 1px solid #2f86c5; }
.fcol { font-size: 10px; }
.fc { height: 12px; padding: 0 2px; line-height: 9px; border-bottom: 3px solid #c01f32; }
.combo { position: relative; height: 15px; margin-right: 3px; border: 1px solid #cfcfcc; background: #fff; }
.combo select { display: block; width: 100%; height: 13px; padding: 0 2px; border: 0; background: none; appearance: none; color: inherit; font: inherit; }
.combo .c { position: absolute; right: 1px; top: 5px; }
.font { width: 100px; }
.size { width: 30px; }
.font select, .size select { font-size: 9px; }
.gallery { display: flex; margin-top: 1px; border: 1px solid #cfcfcc; background: #fff; }
.spin { display: flex; flex-direction: column; width: 9px; background: #f2f2ee; border-left: 1px solid #cfcfcc; }
.spin button { display: flex; flex: 1; align-items: center; justify-content: center; border-bottom: 1px solid #cfcfcc; }
.collapse { align-self: flex-end; margin: 0 5px 0 auto; }

/* Work area */
.work { display: flex; flex: 1; }
.panel { display: flex; align-items: flex-start; flex: 0 0 194px; padding: 11px 13px 0 9px; border-right: 1px solid #c6c6c6; }
.num { flex: 0 0 12px; color: #d0634d; font-size: 10px; line-height: 12px; }
.thumb { flex: 1; height: 92px; padding: 7px 0 0 13px; border: 2px solid #a24a37; background: #fff; color: #222; font: 4px/6px Carlito, Lato, sans-serif; }
.thumb h2 { margin: 0; font-size: 7px; font-weight: 400; line-height: 12px; white-space: nowrap; }
.tcols { display: grid; grid-template-columns: 67px 1fr; padding-top: 5px; white-space: nowrap; }
.thumb li { display: flex; align-items: center; height: 6px; }
.thumb li::before { content: "•"; width: 3px; }
.thumb li span { width: 45px; }
.thumb .s { height: 5px; padding-left: 6px; }
.thumb .s span { width: 14px; }
.thumb .s em { width: 12px; font-style: normal; }
.thumb .s b { font-weight: 400; margin-left: 10px; }
.thumb .m { gap: 1px; }
.thumb .m::before { width: 2px; }
.thumb q { quotes: none; }
.thumb .r span { width: 32px; }

.canvas { flex: 1; padding: 12px 68px 12px 58px; border-bottom: 1px solid #c6c6c6; }
.slide { aspect-ratio: 16 / 9; padding: 49px 65px 0; background: #fff; outline: 1px solid #d2d2d2; color: #000; font-family: Carlito, Lato, sans-serif; }
.slide h2 { margin: 0 0 34px; padding-left: 8px; font-family: Lato, Carlito, sans-serif; font-size: 41px; font-weight: 300; line-height: 60px; white-space: nowrap; }
.cols { display: grid; grid-template-columns: 1fr 1fr; gap: 10px; }
.box { position: relative; min-height: 344px; border: 1px dotted #999; }
.list { padding: 2px 0 0 8px; font-size: 28px; line-height: 30px; white-space: nowrap; }
.list.right { padding: 3px 0 0 9px; }
.list li { display: flex; margin-top: 10px; }
.list li:first-child { margin-top: 0; }
.list li::before { content: "•"; flex: 0 0 17px; font-family: "Liberation Sans", sans-serif; }
.list .k { flex: 0 0 270px; }
.list.right .k { flex-basis: 198px; }
.list .sub { margin-top: 5px; padding-left: 36px; font-size: 24px; line-height: 26px; }
.list .sub .k { flex-basis: 90px; }
.ten { width: 74px; }
.to { width: 86px; }
.to svg { display: block; margin-top: 3px; }
.mix { align-items: center; }
.mix svg { margin: 0 7px; }
.in { padding-left: 13px; }
.caret { position: relative; }
.caret::before { content: ""; position: absolute; left: -1px; top: -3px; width: 1px; height: 35px; background: #999; }
.ibeam { position: absolute; left: 1px; top: 9px; }
.rot { position: absolute; left: 50%; top: -31px; margin-left: -9px; }
.h { position: absolute; width: 7px; height: 7px; margin: -4px; border: 1px solid #8c8c8c; border-radius: 50%; background: #fff; }
.nw, .n, .ne { top: 0; }
.w, .e { top: 50%; }
.sw, .so, .se { top: 100%; }
.nw, .w, .sw { left: 0; }
.n, .so { left: 50%; }
.ne, .e, .se { left: 100%; }

/* Status bar */
.status { display: flex; align-items: center; gap: 13px; height: 16px; margin-top: 1px; padding: 0 4px 0 5px; background: #f2f2ee; border-top: 1px solid #d0d0ce; font-family: "Open Sans", "Noto Sans", sans-serif; font-size: 7px; }
.status button { display: flex; align-items: center; justify-content: center; gap: 1px; height: 15px; }
.views { display: flex; align-items: center; margin-left: auto; }
.notes { margin-right: 13px; }
.comm { margin-right: 12px; }
.views .v { width: 27px; }
.v.on { background: #d0d0cc; }
.z { width: 13px; }
.views input { appearance: none; width: 66px; height: 1px; margin: 0; background: #c2c2c0; }
.views input::-webkit-slider-thumb { appearance: none; width: 3px; height: 8px; background: #555; }
.views .pct { margin: 0 8px 0 5px; color: #777; }

/* Taskbar */
.taskbar { display: grid; grid-template-columns: 1fr 500px 1fr; align-items: center; height: 32px; background: #20221f; border-bottom: 2px solid #17300f; color: #fff; }
.apps { display: grid; grid-template-columns: repeat(17, 1fr); }
.apps button { position: relative; display: flex; align-items: center; justify-content: center; height: 28px; border-radius: 3px; }
.run { background: #333432; }
.rec { background: #7b3f4a; }
.run::after, .rec::after, .dot::after { content: ""; position: absolute; bottom: 0; width: 11px; height: 2px; border-radius: 1px; background: #b9c3cc; }
.rec::after { width: 21px; background: #e79aa4; }
.dot::after { width: 4px; }
.tray { display: flex; align-items: center; justify-content: flex-end; gap: 12px; padding-right: 13px; font-size: 8px; }
.two { line-height: 10px; text-align: center; }
.clock { text-align: right; }
```
